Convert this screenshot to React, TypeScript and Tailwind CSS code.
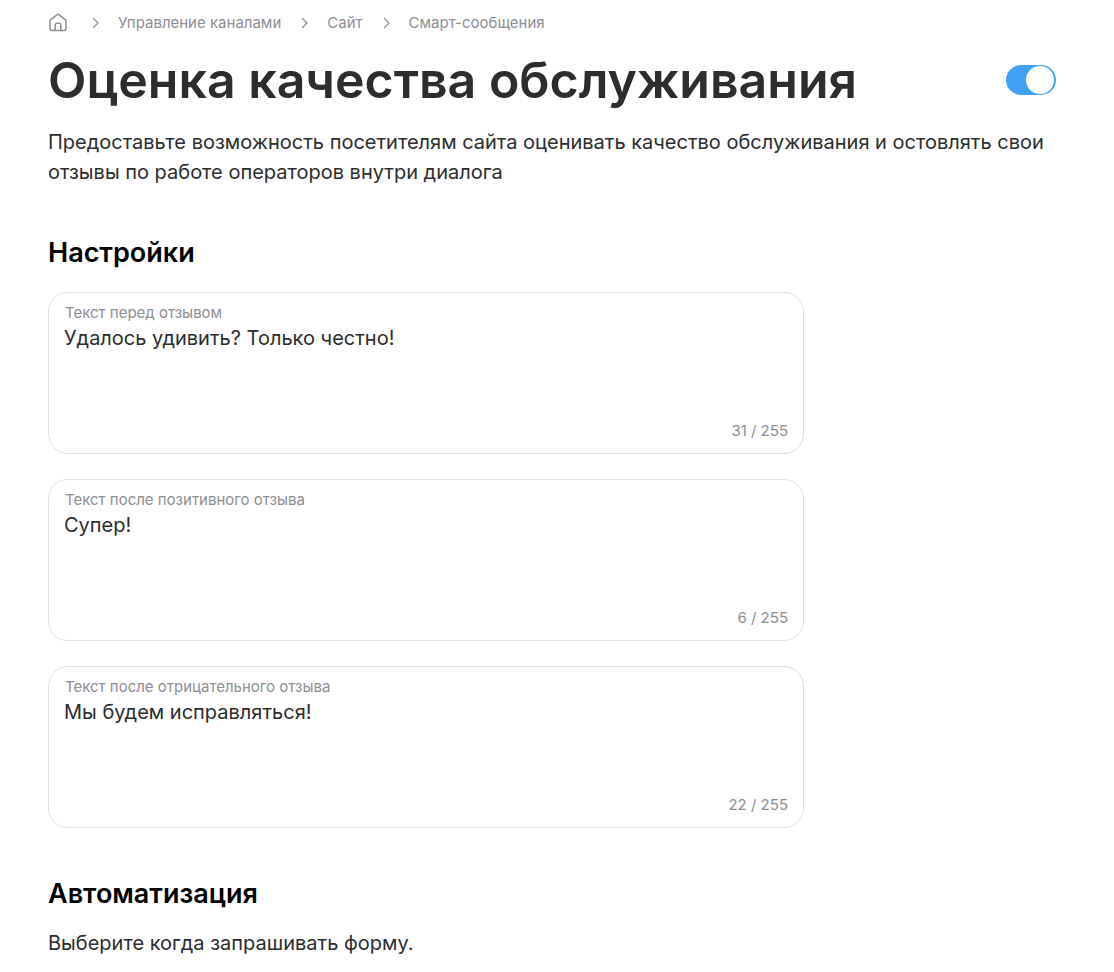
import { useState } from "react";

const crumbs = ["Управление каналами", "Сайт", "Смарт-сообщения"];

const MAX_LENGTH = 255;

function HomeIcon() {
  return (
    <svg width="20" height="20" viewBox="0 0 20 20" fill="none" stroke="currentColor" strokeWidth="1.5" strokeLinecap="round" strokeLinejoin="round">
      <path d="M2 8.400c0-.7.3-1.300.8-1.700l6-4.900a1.900 1.900 0 0 1 2.400 0l6 4.900c.5.400.8 1 .8 1.700V15.500a2 2 0 0 1-2 2H4a2 2 0 0 1-2-2V8.400Z" />
      <path d="M7.200 17.500V12A1.800 1.800 0 0 1 9 10.200h2a1.800 1.800 0 0 1 1.800 1.800v5.500" />
    </svg>
  );
}

function Chevron() {
  return (
    <svg width="8" height="12" viewBox="0 0 8 12" fill="none" stroke="currentColor" strokeWidth="1.2" strokeLinecap="round" strokeLinejoin="round">
      <path d="M1.500 1.500 6 6l-4.500 4.500" />
    </svg>
  );
}

function Breadcrumbs() {
  return (
    <nav className="flex items-center gap-5 text-[15px] leading-5 text-[#8e8e93]">
      <a href="#" aria-label="Главная" className="mr-1">
        <HomeIcon />
      </a>
      {crumbs.map((crumb) => (
        <div key={crumb} className="flex items-center gap-[18px]">
          <Chevron />
          <a href="#">{crumb}</a>
        </div>
      ))}
    </nav>
  );
}

function Toggle() {
  const [enabled, setEnabled] = useState(true);
  return (
    <label className="relative shrink-0 cursor-pointer">
      <input
        type="checkbox"
        role="switch"
        aria-label="Оценка качества обслуживания"
        className="peer sr-only"
        checked={enabled}
        onChange={(e) => setEnabled(e.target.checked)}
      />
      <span className="flex h-[30px] w-[50px] items-center rounded-full bg-gray-300 px-0.5 peer-checked:justify-end peer-checked:bg-[#3fa2f7]">
        <span className="size-7 rounded-full bg-white" />
      </span>
    </label>
  );
}

type TextFieldProps = {
  id: string;
  label: string;
  initial: string;
};

function TextField({ id, label, initial }: TextFieldProps) {
  const [value, setValue] = useState(initial);
  return (
    <div className="flex flex-col rounded-[20px] border border-[#e0e0e0] px-[15px] pt-2.5 pb-3 focus-within:border-[#3fa2f7]">
      <label htmlFor={id} className="px-px text-[15px] leading-5 text-[#8e8e93]">
        {label}
      </label>
      <textarea
        id={id}
        maxLength={MAX_LENGTH}
        className="h-[98px] resize-none text-xl leading-[30px] outline-none"
        value={value}
        onChange={(e) => setValue(e.target.value)}
      />
      <span className="self-end text-[15px] leading-5 text-[#8e8e93]">
        {value.length} / {MAX_LENGTH}
      </span>
    </div>
  );
}

export default function App() {
  return (
    <main className="bg-white px-12 pt-[13px] font-['Inter',sans-serif] text-[#2c2d2e]">
      <Breadcrumbs />
      <header className="flex items-center justify-between pt-[15px] pr-2.5">
        <h1 className="text-[50px] leading-16 font-semibold">Оценка качества обслуживания</h1>
        <Toggle />
      </header>
      <p className="mt-[15px] text-xl leading-[30px]">
        Предоставьте возможность посетителям сайта оценивать качество обслуживания и остовлять свои
        отзывы по работе операторов внутри диалога
      </p>

      <section className="mt-12">
        <h2 className="text-[27px] leading-9 font-semibold text-black">Настройки</h2>
        <div className="mt-[21px] flex max-w-[756px] flex-col gap-[25px]">
          <TextField id="before" label="Текст перед отзывом" initial="Удалось удивить? Только честно!" />
          <TextField id="positive" label="Текст после позитивного отзыва" initial="Супер!" />
          <TextField id="negative" label="Текст после отрицательного отзыва" initial="Мы будем исправляться!" />
        </div>
      </section>

      <section className="mt-12">
        <h2 className="text-[27px] leading-9 font-semibold text-black">Автоматизация</h2>
        <p className="mt-4 text-xl leading-[30px]">Выберите когда запрашивать форму.</p>
      </section>
    </main>
  );
}
